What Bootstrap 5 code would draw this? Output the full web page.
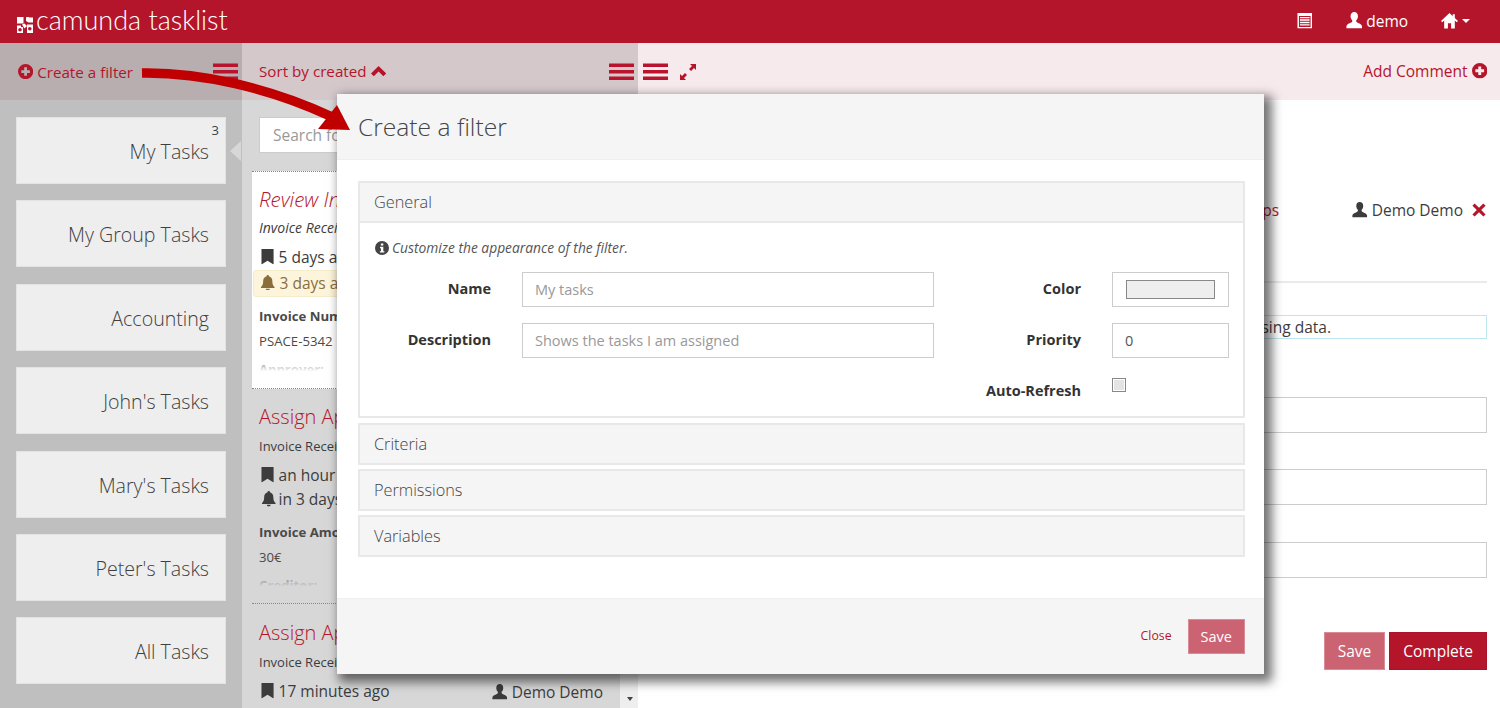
<!DOCTYPE html>
<html lang="en">
<head>
<meta charset="utf-8">
<title>camunda tasklist</title>
<link href="https://cdn.jsdelivr.net/npm/bootstrap@5.3.0/dist/css/bootstrap.min.css" rel="stylesheet">
<style>
html,body{height:708px;overflow:hidden}
body{font-family:"Open Sans","Liberation Sans",sans-serif;font-size:15.5px;color:#3c3c3c;background:#fff;position:relative}
svg.gi{width:1em;height:1em;fill:currentColor;vertical-align:-.12em;display:inline-block}
.topbar{height:43px;background:#b5152b;padding:0 30px 0 17px;color:#fff}
.brandname{font-family:Lato,sans-serif;font-weight:300;font-size:27px;color:#fff;line-height:39px;padding:0;margin:0 0 4px}
.brandname:hover{color:#fff}
.brandname svg{width:16px;height:16px;fill:#fff;margin-right:3px;vertical-align:-3px}
.topbar .nav-link{color:#fff;padding:0;font-size:15.5px}
.navgap{margin-right:33px}
.homeicon{font-size:17px}
.navuser{font-size:16.5px}
.mainrow{height:665px;overflow:hidden}
.filtercol{width:242px;background:#bfbfbf;flex:none}
.listcol{width:396px;background:#d7d7d7;flex:none;position:relative;overflow:hidden}
.formcol{flex:1;min-width:0;overflow:hidden}
.bar{height:57px;color:#b5152b;flex:none}
.filtercol .bar{background:#b8adaf;padding:0 4px 0 18px;font-size:15.2px}
.filtercol .bar a{margin-top:1px}
.listcol .bar{background:#d4c8cb;padding:0 4px 0 17px;font-size:15.2px}
.formcol .bar{background:#f7eaed;padding:0 13px 0 5px}
.barmenu{width:25px;height:17px;display:block;fill:#b9142e}
.barleft{gap:12px}
.fullicon{font-size:16px}
.tiles{padding:17px 16px 0;gap:16.4px}
.tile{height:67px;flex:none;background:#eee;border:1px solid #e3e3e3;position:relative;text-align:right;padding:20px 16px 0 0;font-size:19.6px;font-weight:300;line-height:27px;color:#3f3f3f}
.tile .count{position:absolute;right:6px;top:4px;font-size:13px;line-height:16px;font-weight:400}
.tile .notch{position:absolute;left:calc(100% + 5px);top:23px;width:0;height:0;border-top:10px solid transparent;border-bottom:10px solid transparent;border-right:11px solid #d7d7d7}
.search{margin:17px 0 0 17px;width:340px;height:36px;flex:none;border-radius:0;font-size:15.5px;padding:5px 13px;border-color:#ccc}
.search::placeholder,.fieldbox::placeholder{color:#999}
.tasks{margin:18px 0 0 10px;width:358px;flex:none}
.taskitem{padding:13px 7px 0;height:215px;overflow:hidden;border-bottom:1px dotted #888;position:relative}
.taskitem.picked{background:#fff;border-top:1px dotted #888;height:218px;padding-top:12px}
.taskitem:last-child{border-bottom:0;height:104px;padding-top:14px}
.tasktitle{font-size:20px;font-weight:300;color:#b5152b;line-height:30px;margin-bottom:5px;white-space:nowrap}
.picked .tasktitle{font-size:20.5px}
.taskproc{font-size:13px;line-height:18px;margin-bottom:10px;color:#3c3c3c;white-space:nowrap}
.picked .taskproc{font-size:14px}
.dateline{line-height:21px;padding-left:2px}
.dateline svg{margin-right:-2px}
.dateline + .dateline{margin-top:3px}
.dateline + .varname{margin-top:13px}
.followup{background:#fcf5dc;border:1px solid #f6ecc9;border-radius:3px;color:#8a6d3b;line-height:25px;margin:1.5px -6px 0;padding:0 0 0 6px;width:330px}
.varname{font-weight:700;font-size:13.2px;line-height:18px;margin-top:10px;color:#4a4a4a}
.varval{font-size:13.2px;line-height:18px;margin-top:7px;color:#4a4a4a}
.fadeout{position:absolute;left:0;right:0;bottom:0;height:33px}
.picked .fadeout{background:linear-gradient(rgba(255,255,255,0),#fff 50%)}
.taskitem:not(.picked) .fadeout{background:linear-gradient(rgba(215,215,215,0),#d7d7d7 50%)}
.scrolltrack{position:absolute;right:0;top:574px;width:18px;height:91px;background:#eee}
.scrolltrack i{position:absolute;left:7px;bottom:7px;border-top:4px solid #444;border-left:3px solid transparent;border-right:3px solid transparent}
.plainlink{color:#b5152b;text-decoration:none}
.ownerrow{padding:98px 14px 0 0;line-height:24px;flex:none}
.ownerrow .plainlink{margin-right:73px}
.ownerrow .xx{color:#b5152b;margin-left:9px;font-size:14px}
.divider{border-top:2px solid #eaeaea;margin:59px 13px 0;opacity:1;flex:none}
.infobox{margin:32px 13px 0;height:24px;flex:none;border:1px solid #bfe6f0;line-height:22px;text-align:right;padding-right:155px}
.fieldrow{height:36px;flex:none;border:1px solid #ccc;border-radius:0;margin:0 13px;width:auto}
.gapa{margin-top:58px}
.gapb{margin-top:36px}
.gapc{margin-top:37px}
.formbtns{margin:54px 13px 0 0;gap:4px;flex:none}
.redbtn,.palebtn{border-radius:0;font-size:15.5px;height:38px;color:#fff;padding:0 13px;line-height:36px}
.redbtn{background:#b5152b;border-color:#a8152a}
.palebtn{background:#cc6372;border-color:#d98b96}
.redbtn:hover{background:#b5152b;color:#fff}
.palebtn:hover{background:#cc6372;color:#fff}
.dialogbox{position:absolute;left:337px;top:94px;width:927px;height:580px;background:#fff;box-shadow:5px 5px 10px 3px rgba(0,0,0,.55);border:0;border-radius:0;z-index:10}
.dialoghead{height:66px;background:#f5f5f5;border-bottom:1px solid #eee;padding:0 21px;font-size:24.6px;font-weight:300;line-height:66px;color:#444}
.dialogbody{padding:21px 19px 0 21px}
.dialogfoot{position:absolute;left:0;right:0;bottom:0;height:76px;background:#f5f5f5;border-top:1px solid #eee;padding:0 19px 0 0;gap:16px}
.dialogfoot .plainlink{font-size:12.3px}
.dialogfoot .palebtn{height:35px;line-height:33px;padding:0 12px;font-size:14.5px}
.fold{background:#f5f5f5;border:2px solid #e8e8e8;height:41.5px;line-height:38px;padding:0 14px;font-size:16.3px;font-weight:300;color:#444;margin-bottom:4.5px}
.foldopen{border:2px solid #e8e8e8;border-top:0;height:195.5px;margin-top:-4.5px;margin-bottom:5px;padding:16px 15px 0}
.hint{font-size:13.8px;font-style:italic;line-height:18px;color:#555;margin-bottom:15px}
.hint svg{font-size:14px;margin-right:3px;vertical-align:-2px;color:#444}
.fieldgrid{display:grid;grid-template-columns:147px 412px 178px 117px;row-gap:16px;grid-auto-rows:35px;align-items:center}
.fieldgrid label{font-weight:700;font-size:14.5px;text-align:right;padding-right:31px;color:#333;margin:0}
.fieldbox{height:35px;border-radius:0;border-color:#ccc;font-size:14.5px;padding:4px 12px;color:#555}
.colorbox{height:35px;border:1px solid #ccc;padding:7px 13px;width:117px;display:block;background:#fff}
.colorbox::-webkit-color-swatch-wrapper{padding:0}
.colorbox::-webkit-color-swatch{border:1px solid #888;border-radius:0}
.checkcell{align-self:start;margin-top:4px}
.checkcell input{appearance:none;display:block;width:14px;height:14px;border:1px solid #888;background:#e4e4e4;box-shadow:inset 0 0 0 1px #fff;margin:0}
.flight{position:absolute;left:0;top:0;width:400px;height:160px;z-index:20;pointer-events:none}
</style>
</head>
<body>
<svg width="0" height="0" class="position-absolute">
<defs>
<symbol id="i-plus" viewBox="0 0 16 16"><path fill-rule="evenodd" d="M8 0a8 8 0 1 0 0 16A8 8 0 0 0 8 0zM6.500 3.500h3v3h3v3h-3v3h-3v-3h-3v-3h3z"/></symbol>
<symbol id="i-info" viewBox="0 0 16 16"><path fill-rule="evenodd" d="M8 0a8 8 0 1 0 0 16A8 8 0 0 0 8 0zM6.700 2.800h2.800v2.400H6.700zM5.800 6.700h3.700v5h1.200v1.500H5.600v-1.500h1.200V8.200h-1z"/></symbol>
<symbol id="i-user" viewBox="0 0 16 16"><path d="M8 0C5.800 0 4.400 1.700 4.400 4c0 1.600.7 3 1.600 3.900.2.800.1 1.400-.3 1.900C4.500 11 .9 11.400.4 14v2h15.200v-2c-.5-2.600-4.100-3-5.300-4.200-.4-.5-.5-1.100-.3-1.900.9-.9 1.600-2.300 1.600-3.900C11.600 1.700 10.200 0 8 0z"/></symbol>
<symbol id="i-home" viewBox="0 0 16 16"><path d="M8 1 0 8.500l1.200 1.200L3 8v7.500h3.500v-5h3v5H13V8l1.800 1.700L16 8.500l-3-2.800V2h-2v1.900z"/></symbol>
<symbol id="i-mark" viewBox="0 0 16 16"><path d="M.5 0h12.500v16L6.750 12 .5 16z"/></symbol>
<symbol id="i-bell" viewBox="0 0 16 16"><path d="M8 0a1.200 1.200 0 0 0-1.200 1.400C4.500 2 3.300 3.800 3.300 6c0 3.500-.8 5-2.300 6.500v1h14v-1C13.500 11 12.700 9.500 12.700 6c0-2.200-1.200-4-3.500-4.600A1.200 1.200 0 0 0 8 0zM6 14.300a2 2 0 0 0 4 0z"/></symbol>
<symbol id="i-up" viewBox="0 0 16 16"><path d="M8 2 16 10 13 13 8 8 3 13 0 10z"/></symbol>
<symbol id="i-x" viewBox="0 0 16 16"><path d="M3 .5 8 5.500 13 .5 15.500 3l-5 5 5 5-2.500 2.500-5-5-5 5L.5 13l5-5-5-5z"/></symbol>
<symbol id="i-full" viewBox="0 0 16 16"><path d="M10 0h6v6l-2-2-3 3-2-2 3-3zM0 16v-6l2 2 3-3 2 2-3 3 2 2z"/></symbol>
<symbol id="i-menu" viewBox="0 0 25 17"><rect y=".5" width="25" height="3.500"/><rect y="7" width="25" height="3.500"/><rect y="13.500" width="25" height="3.500"/></symbol>
<symbol id="i-list" viewBox="0 0 16 16"><path fill-rule="evenodd" d="M.5 0h15v16H.5zM2 3v11.500h12V3z"/><path d="M3 4h10v1.500H3zM3 6.500h10V8H3zM3 9h10v1.500H3zM3 11.500h10V13H3z"/></symbol>
<symbol id="i-logo" viewBox="0 0 16 16"><path fill-rule="evenodd" d="M0 0h6.500v6.500H0zM9 .5a2.500 2.500 0 0 1 3.500 0H16v5h-4.500L9 4zM5 7.500l2.500-1 2.500 2.500-2.500 2.500zM10 7.500h6V16h-6zM12.800 10a1.800 1.800 0 1 0 0 3.600 1.800 1.800 0 0 0 0-3.600zM0 8.500h4v1.500h2v6H0zM3 11a1.800 1.800 0 1 0 0 3.600A1.800 1.800 0 0 0 3 11z"/></symbol>
</defs>
</svg>

<nav class="navbar topbar d-flex justify-content-between align-items-center flex-nowrap">
  <a class="navbar-brand brandname" href="#"><svg viewBox="0 0 16 16"><use href="#i-logo"/></svg>camunda tasklist</a>
  <ul class="nav align-items-center flex-nowrap">
    <li class="nav-item navgap"><a class="nav-link" href="#"><svg class="gi"><use href="#i-list"/></svg></a></li>
    <li class="nav-item navgap"><a class="nav-link" href="#"><svg class="gi navuser"><use href="#i-user"/></svg> demo</a></li>
    <li class="nav-item"><a class="nav-link dropdown-toggle" href="#"><svg class="gi homeicon"><use href="#i-home"/></svg></a></li>
  </ul>
</nav>

<div class="d-flex mainrow">
  <div class="filtercol d-flex flex-column">
    <div class="bar d-flex align-items-center justify-content-between">
      <a class="plainlink" href="#"><svg class="gi"><use href="#i-plus"/></svg> Create a filter</a>
      <svg class="barmenu"><use href="#i-menu"/></svg>
    </div>
    <div class="tiles d-flex flex-column">
      <div class="tile">My Tasks<span class="count">3</span><span class="notch"></span></div>
      <div class="tile">My Group Tasks</div>
      <div class="tile">Accounting</div>
      <div class="tile">John's Tasks</div>
      <div class="tile">Mary's Tasks</div>
      <div class="tile">Peter's Tasks</div>
      <div class="tile">All Tasks</div>
    </div>
  </div>

  <div class="listcol d-flex flex-column">
    <div class="bar d-flex align-items-center justify-content-between">
      <a class="plainlink" href="#">Sort by created <svg class="gi"><use href="#i-up"/></svg></a>
      <svg class="barmenu"><use href="#i-menu"/></svg>
    </div>
    <input class="form-control search" placeholder="Search for tasks">
    <div class="tasks">
      <div class="taskitem picked">
        <div class="tasktitle fst-italic">Review Invoice</div>
        <div class="taskproc fst-italic">Invoice Receipt</div>
        <div class="dateline"><svg class="gi"><use href="#i-mark"/></svg> 5 days ago</div>
        <div class="followup"><svg class="gi"><use href="#i-bell"/></svg> 3 days ago</div>
        <div class="varname">Invoice Number:</div>
        <div class="varval">PSACE-5342</div>
        <div class="varname">Approver:</div>
        <div class="fadeout"></div>
      </div>
      <div class="taskitem">
        <div class="tasktitle">Assign Approver</div>
        <div class="taskproc">Invoice Receipt</div>
        <div class="dateline"><svg class="gi"><use href="#i-mark"/></svg> an hour ago</div>
        <div class="dateline"><svg class="gi"><use href="#i-bell"/></svg> in 3 days</div>
        <div class="varname">Invoice Amount:</div>
        <div class="varval">30€</div>
        <div class="varname">Creditor:</div>
        <div class="fadeout"></div>
      </div>
      <div class="taskitem">
        <div class="tasktitle">Assign Approver</div>
        <div class="taskproc">Invoice Receipt</div>
        <div class="d-flex justify-content-between">
          <div class="dateline"><svg class="gi"><use href="#i-mark"/></svg> 17 minutes ago</div>
          <div><svg class="gi"><use href="#i-user"/></svg> Demo Demo</div>
        </div>
      </div>
    </div>
    <div class="scrolltrack"><i></i></div>
  </div>

  <div class="formcol d-flex flex-column">
    <div class="bar d-flex align-items-center justify-content-between">
      <div class="d-flex align-items-center barleft">
        <svg class="barmenu"><use href="#i-menu"/></svg>
        <svg class="gi fullicon"><use href="#i-full"/></svg>
      </div>
      <a class="plainlink" href="#">Add Comment <svg class="gi"><use href="#i-plus"/></svg></a>
    </div>
    <div class="ownerrow d-flex justify-content-end align-items-center">
      <a class="plainlink" href="#">Add Groups</a>
      <span><svg class="gi"><use href="#i-user"/></svg> Demo Demo</span>
      <svg class="gi xx"><use href="#i-x"/></svg>
    </div>
    <hr class="divider">
    <div class="infobox">Approve after processing data.</div>
    <input class="form-control fieldrow gapa">
    <input class="form-control fieldrow gapb">
    <input class="form-control fieldrow gapc">
    <div class="formbtns d-flex justify-content-end">
      <button class="btn palebtn" type="button">Save</button>
      <button class="btn redbtn" type="button">Complete</button>
    </div>
  </div>
</div>

<div class="card dialogbox">
  <div class="dialoghead">Create a filter</div>
  <div class="dialogbody">
    <div class="fold">General</div>
    <div class="foldopen">
      <div class="hint"><svg class="gi"><use href="#i-info"/></svg>Customize the appearance of the filter.</div>
      <div class="fieldgrid">
        <label for="fn">Name</label>
        <input id="fn" class="form-control fieldbox" placeholder="My tasks">
        <label>Color</label>
        <input class="colorbox" type="color" value="#eeeeee">
        <label for="fd">Description</label>
        <input id="fd" class="form-control fieldbox" placeholder="Shows the tasks I am assigned">
        <label for="fp">Priority</label>
        <input id="fp" class="form-control fieldbox" value="0">
        <span></span><span></span>
        <label for="fa">Auto-Refresh</label>
        <div class="checkcell"><input id="fa" type="checkbox"></div>
      </div>
    </div>
    <div class="fold">Criteria</div>
    <div class="fold">Permissions</div>
    <div class="fold">Variables</div>
  </div>
  <div class="dialogfoot d-flex align-items-center justify-content-end">
    <a class="plainlink" href="#">Close</a>
    <button class="btn palebtn" type="button">Save</button>
  </div>
</div>

<svg class="flight" viewBox="0 0 400 160">
  <path d="M142 73C200 72 270 88 330 116" fill="none" stroke="#c00000" stroke-width="9.500"/>
  <path d="M318 129 337 105 350 130z" fill="#c00000"/>
</svg>
</body>
</html>
